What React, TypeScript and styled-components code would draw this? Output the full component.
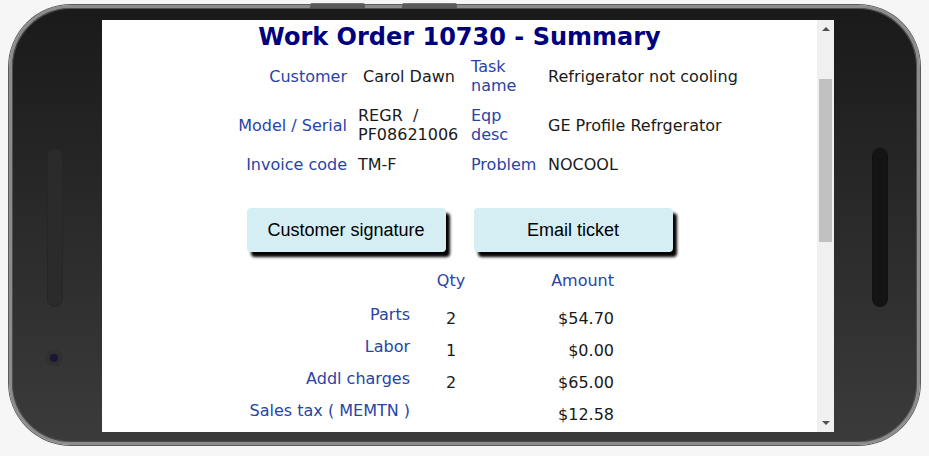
import styled, { createGlobalStyle } from "styled-components";

const GlobalStyle = createGlobalStyle`
    html, body { margin: 0; padding: 0; background: #f6f6f6; }
    body { font-family: "DejaVu Sans", Verdana, sans-serif; }
`;

const Phone = styled.div`
    position: relative; box-sizing: border-box; width: 911px; height: 440px; margin: 5px 9px;
    display: flex; align-items: stretch;
    border: 3px solid #8c8c8c; border-radius: 62px;
    box-shadow: 0 0 0 1px #5c5c5c, inset 0 0 0 1px #4e4e4e;
    background: linear-gradient(to bottom, #1a1a1a 0%, #2c2c2c 55%, #3b3b3b 100%);
`;
const SideKey = styled.span<{ $left: number }>`
    position: absolute; top: -5px; left: ${p => p.$left}px; width: 55px; height: 4px;
    background: #5a5a5a; border-top: 1px solid #777; border-radius: 2px 2px 0 0;
`;
const Bezel = styled.div<{ $w: number; $pad: number }>`
    width: ${p => p.$w}px; flex: none; box-sizing: border-box;
    padding: 140px 0 0 ${p => p.$pad}px;
    display: flex; flex-direction: column; align-items: flex-start;
`;
const Speaker = styled.div<{ $dark?: boolean }>`
    width: 16px; height: 159px; box-sizing: border-box; border-radius: 8px;
    background: ${p => (p.$dark ? "#141414" : "#2b2b2b")};
    border: 1px solid ${p => (p.$dark ? "#121212" : "#262626")};
`;
const Camera = styled.div`
    width: 16px; height: 16px; margin: 43px 0 0 -1px; border-radius: 50%;
    background: #303030; display: flex; align-items: center; justify-content: center;
    &::after { content: ''; width: 8px; height: 8px; border-radius: 50%; background: #1c1634; }
`;
const Screen = styled.div`
    width: 732px; height: 412px; margin-top: 12px; flex: none;
    background: #fff; display: flex; overflow: hidden;
`;
const Content = styled.div`
    width: 715px; flex: none; overflow: hidden;
`;
const ScrollBar = styled.div`
    width: 17px; flex: none; background: #f0f0f0;
    display: flex; flex-direction: column; align-items: center;
`;
const Arrow = styled.span<{ $down?: boolean }>`
    width: 0; height: 0; margin: ${p => (p.$down ? "auto 0 7px" : "7px 0 0")};
    border-left: 4px solid transparent; border-right: 4px solid transparent;
    ${p => (p.$down ? "border-top: 4px solid #505050;" : "border-bottom: 4px solid #505050;")}
`;
const Thumb = styled.div`
    width: 13px; height: 163px; margin-top: 48px; background: #c1c1c1;
`;

const Title = styled.h1`
    margin: 0; padding-top: 3px; text-align: center;
    font-size: 24px; line-height: 28px; font-weight: bold; color: #00007f;
`;
const InfoGrid = styled.div`
    display: grid; grid-template-columns: 245px 102px 66px auto;
    column-gap: 11px; row-gap: 11px; align-items: center;
    margin-top: 6px; font-size: 16px; line-height: 19px;
`;
const Label = styled.div<{ $right?: boolean }>`
    color: #2744a6; text-align: ${p => (p.$right ? "right" : "left")};
`;
const Value = styled.div`
    color: #1a1a1a; white-space: pre;
`;
const ButtonRow = styled.div`
    display: flex; justify-content: center; gap: 28px; margin-top: 34px;
`;
const ActionButton = styled.button`
    width: 199px; height: 44px; border: 0; border-radius: 4px; padding: 0;
    background: #d5eef3; color: #000; cursor: pointer;
    font-family: "Liberation Sans", Arial, sans-serif; font-size: 18px;
    box-shadow: 4px 5px 3px #000;
`;
const Charges = styled.div`
    display: grid; grid-template-columns: 308px 82px 122px;
    grid-template-rows: 34px; grid-auto-rows: 32px;
    margin-top: 19px; font-size: 16px; line-height: 19px;
`;
const ChargeHead = styled.div<{ $align: string }>`
    color: #2744a6; text-align: ${p => p.$align};
`;
const ChargeLabel = styled.div`
    color: #2744a6; text-align: right;
`;
const ChargeValue = styled.div<{ $align: string }>`
    color: #1a1a1a; text-align: ${p => p.$align}; padding-top: 4px;
`;

const info = [
    ["Customer", "\u00a0Carol Dawn", "Task name", "Refrigerator not cooling"],
    ["Model / Serial", "REGR\u00a0 /\nPF08621006", "Eqp desc", "GE Profile Refrgerator"],
    ["Invoice code", "TM-F", "Problem", "NOCOOL"],
];

const charges = [
    ["Parts", "2", "$54.70"],
    ["Labor", "1", "$0.00"],
    ["Addl charges", "2", "$65.00"],
    ["Sales tax ( MEMTN )", "", "$12.58"],
];

export default function App() {
    return (
        <>
            <GlobalStyle />
            <Phone>
                <SideKey $left={298} />
                <SideKey $left={390} />
                <Bezel $w={90} $pad={35}>
                    <Speaker />
                    <Camera />
                </Bezel>
                <Screen>
                    <Content>
                        <Title>Work Order 10730 - Summary</Title>
                        <InfoGrid>
                            {info.map(row => (
                                <>
                                    <Label $right>{row[0]}</Label>
                                    <Value>{row[1]}</Value>
                                    <Label>{row[2]}</Label>
                                    <Value>{row[3]}</Value>
                                </>
                            ))}
                        </InfoGrid>
                        <ButtonRow>
                            <ActionButton>Customer signature</ActionButton>
                            <ActionButton>Email ticket</ActionButton>
                        </ButtonRow>
                        <Charges>
                            <div />
                            <ChargeHead $align="center">Qty</ChargeHead>
                            <ChargeHead $align="right">Amount</ChargeHead>
                            {charges.map(c => (
                                <>
                                    <ChargeLabel>{c[0]}</ChargeLabel>
                                    <ChargeValue $align="center">{c[1]}</ChargeValue>
                                    <ChargeValue $align="right">{c[2]}</ChargeValue>
                                </>
                            ))}
                        </Charges>
                    </Content>
                    <ScrollBar>
                        <Arrow />
                        <Thumb />
                        <Arrow $down />
                    </ScrollBar>
                </Screen>
                <Bezel $w={83} $pad={38}>
                    <Speaker $dark />
                </Bezel>
            </Phone>
        </>
    );
}
